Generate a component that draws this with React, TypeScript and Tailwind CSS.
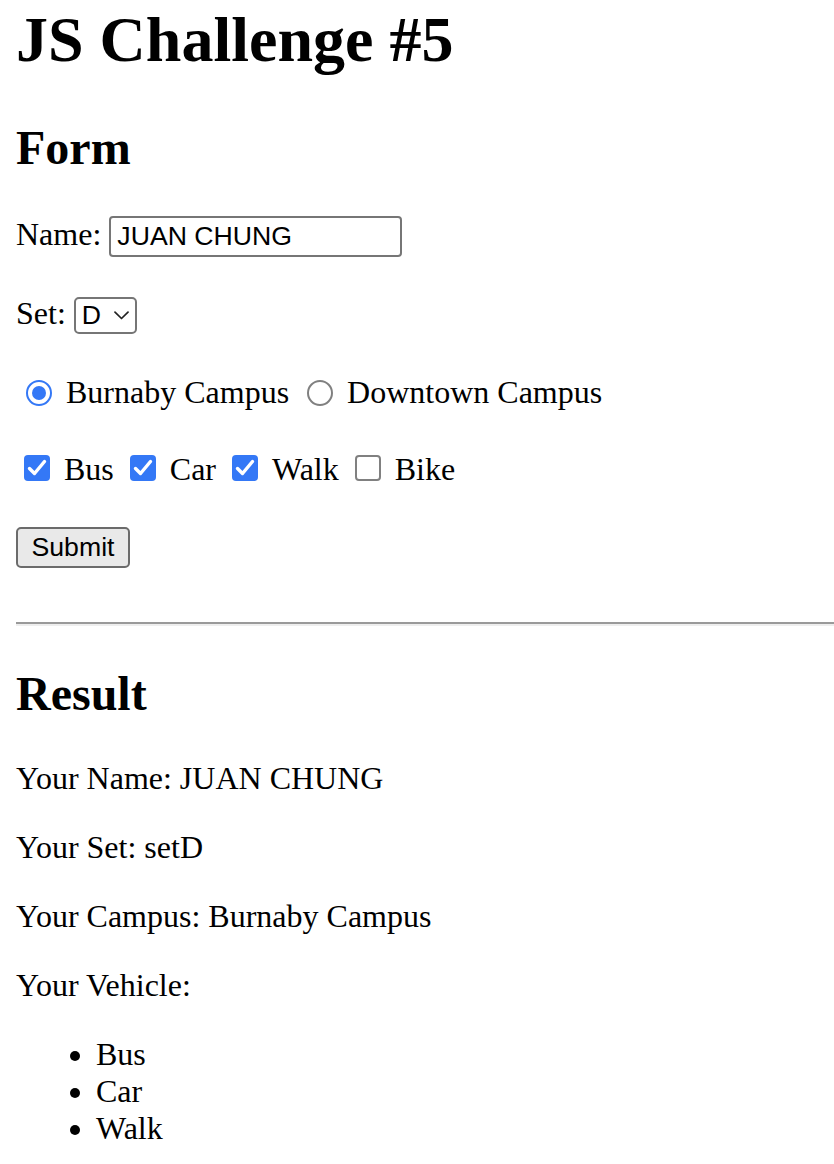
import React, { useState } from 'react';

// Native-looking controls drawn at 2x, like the macOS Chrome screenshot
function Radio({ checked }: { checked: boolean }) {
    if (checked) {
        return (
            <span className="ml-[10px] mr-[6px] flex h-[26px] w-[26px] shrink-0 items-center justify-center rounded-full border-[2.5px] border-[#3478f6] bg-white">
                <span className="h-[14px] w-[14px] rounded-full bg-[#3478f6]" />
            </span>
        );
    }
    return <span className="ml-[10px] mr-[6px] block h-[26px] w-[26px] shrink-0 rounded-full border-2 border-[#808080] bg-white" />;
}

function Checkbox({ checked }: { checked: boolean }) {
    if (checked) {
        return (
            <span className="ml-[8px] mr-[6px] flex h-[26px] w-[26px] shrink-0 items-center justify-center rounded-[4px] bg-[#3478f6]">
                <svg width="26" height="26" viewBox="0 0 26 26" fill="none">
                    <path d="M5.5 13.5 L10.5 18.5 L20.5 6.5" stroke="white" strokeWidth="3.4" strokeLinecap="round" strokeLinejoin="round" />
                </svg>
            </span>
        );
    }
    return <span className="ml-[8px] mr-[6px] block h-[26px] w-[26px] shrink-0 rounded-[4px] border-2 border-[#808080] bg-white" />;
}

export default function App() {
    const [name, setName] = useState('JUAN CHUNG');
    const vehicles = ['Bus', 'Car', 'Walk', 'Bike'];
    const chosen = ['Bus', 'Car', 'Walk'];

    return (
        <div className="min-h-[1164px] bg-white pl-[16px] font-['Liberation_Serif',serif] text-[32px] leading-[normal] text-black">
            <h1 className="mt-[3px] text-[64px] font-bold leading-[normal]">JS Challenge #5</h1>

            <h2 className="mt-[43px] text-[48px] font-bold leading-[normal]">Form</h2>

            {/* Name */}
            <div className="mt-[41px] flex items-baseline gap-[8px]">
                <span>Name:</span>
                <input
                    value={name}
                    onChange={(e) => setName(e.target.value)}
                    className="h-[41px] w-[293px] rounded-[4px] border-2 border-[#767676] px-[6px] font-['Liberation_Sans',sans-serif] text-[26.67px] leading-[normal] outline-none"
                />
            </div>

            {/* Set */}
            <div className="mt-[38px] flex items-baseline gap-[8px]">
                <span>Set:</span>
                <span className="flex h-[37px] w-[63px] items-center justify-between rounded-[5px] border-2 border-[#767676] pl-[6px] pr-[6px] font-['Liberation_Sans',sans-serif] text-[26.67px] leading-[normal]">
                    <span>D</span>
                    <svg width="15" height="9" viewBox="0 0 15 9" fill="none">
                        <path d="M1 1.2 L7.5 7.5 L14 1.2" stroke="#222" strokeWidth="1.7" strokeLinecap="round" strokeLinejoin="round" />
                    </svg>
                </span>
            </div>

            {/* Campus */}
            <div className="mt-[40px] flex items-center">
                <Radio checked />
                <span className="ml-[8px]">Burnaby Campus</span>
                <span className="ml-[8px] flex items-center">
                    <Radio checked={false} />
                </span>
                <span className="ml-[8px]">Downtown Campus</span>
            </div>

            {/* Vehicle */}
            <div className="mt-[40px] flex items-center">
                {vehicles.map((v, i) => (
                    <span key={v} className={i === 0 ? 'flex items-center' : 'ml-[8px] flex items-center'}>
                        <span className="flex -translate-y-[2px]">
                            <Checkbox checked={chosen.includes(v)} />
                        </span>
                        <span className="ml-[8px]">{v}</span>
                    </span>
                ))}
            </div>

            <button className="mt-[39px] flex h-[41px] w-[114px] items-center justify-center rounded-[5px] border-2 border-[#6b6b6b] bg-[#e9e9e9] font-['Liberation_Sans',sans-serif] text-[26.67px] leading-[normal]">
                Submit
            </button>

            <hr className="mt-[54px] h-0 border-t-2 border-b-2 border-t-[#9a9a9a] border-b-[#eeeeee]" />

            <h2 className="mt-[39.5px] text-[48px] font-bold leading-[normal]">Result</h2>

            <p className="mt-[39px]">Your Name: {name}</p>
            <p className="mt-[32px]">Your Set: setD</p>
            <p className="mt-[32px]">Your Campus: Burnaby Campus</p>
            <p className="mt-[32px]">Your Vehicle:</p>
            <ul className="mt-[32px] list-disc pl-[80px]">
                {chosen.map((v) => (
                    <li key={v}>{v}</li>
                ))}
            </ul>
        </div>
    );
}
